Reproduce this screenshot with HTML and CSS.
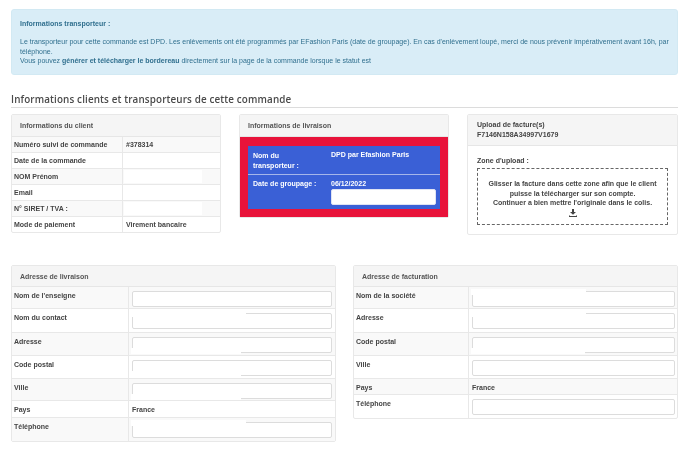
FILE: index.html
```html
<!DOCTYPE html>
<html lang="fr">
<head>
<meta charset="utf-8">
<title>Informations transporteur</title>
<link rel="stylesheet" href="styles.css">
</head>
<body>
<main class="page">
  <section class="alert">
    <p class="alert-title"><b>Informations transporteur :</b></p>
    <p>Le transporteur pour cette commande est DPD. Les enlèvements ont été programmés par EFashion Paris (date de groupage). En cas d'enlèvement loupé, merci de nous prévenir impérativement avant 16h, par téléphone.<br>Vous pouvez <b>générer et télécharger le bordereau</b> directement sur la page de la commande lorsque le statut est</p>
  </section>

  <h2 class="section-title">Informations clients et transporteurs de cette commande</h2>

  <div class="three-cols">
    <section class="panel">
      <header class="panel-head">Informations du client</header>
      <div class="info-row striped"><span class="info-label">Numéro suivi de commande</span><span class="info-value">#378314</span></div>
      <div class="info-row"><span class="info-label">Date de la commande</span><span class="info-value"></span></div>
      <div class="info-row striped"><span class="info-label">NOM Prénom</span><span class="info-value"><i class="mask mask-info"></i></span></div>
      <div class="info-row"><span class="info-label">Email</span><span class="info-value"></span></div>
      <div class="info-row striped"><span class="info-label">N° SIRET / TVA :</span><span class="info-value"><i class="mask mask-info"></i></span></div>
      <div class="info-row"><span class="info-label">Mode de paiement</span><span class="info-value">Virement bancaire</span></div>
    </section>

    <section class="panel panel-delivery">
      <header class="panel-head">Informations de livraison</header>
      <div class="red-box">
        <div class="blue-box">
          <div class="blue-row blue-row-first"><span class="blue-label">Nom du<br>transporteur :</span><span>DPD par Efashion Paris</span></div>
          <div class="blue-row"><span class="blue-label">Date de groupage :</span><div class="blue-date">06/12/2022<span class="blue-input"></span></div></div>
        </div>
      </div>
    </section>

    <section class="panel panel-upload">
      <header class="panel-head panel-head-tall">Upload de facture(s)<br>F7146N158A34997V1679</header>
      <div class="upload-body">
        <p class="upload-label">Zone d'upload :</p>
        <div class="dropzone">
          <p>Glisser la facture dans cette zone afin que le client<br>puisse la télécharger sur son compte.<br>Continuer a bien mettre l'originale dans le colis.</p>
          <svg class="dl-icon" width="8" height="8" viewBox="0 0 8 8" aria-hidden="true"><path d="M3 0h2v3h2L4 5.8 1 3h2zM0 6.4h1v.7h6v-.7h1V8H0z" fill="#444"/></svg>
        </div>
      </div>
    </section>
  </div>

  <div class="two-cols">
    <section class="panel addr addr-left">
      <header class="panel-head">Adresse de livraison</header>
      <div class="addr-row h22 striped"><span class="addr-label">Nom de l'enseigne</span><span class="addr-value"><span class="field"></span></span></div>
      <div class="addr-row h24"><span class="addr-label">Nom du contact</span><span class="addr-value"><span class="field"><i class="mask mask-top"></i></span></span></div>
      <div class="addr-row h23 striped"><span class="addr-label">Adresse</span><span class="addr-value"><span class="field"><i class="mask mask-bottom"></i></span></span></div>
      <div class="addr-row h23"><span class="addr-label">Code postal</span><span class="addr-value"><span class="field"><i class="mask mask-bottom"></i></span></span></div>
      <div class="addr-row h22 striped"><span class="addr-label">Ville</span><span class="addr-value"><span class="field"><i class="mask mask-bottom"></i></span></span></div>
      <div class="addr-row h17"><span class="addr-label">Pays</span><span class="addr-value">France</span></div>
      <div class="addr-row h23 striped"><span class="addr-label">Téléphone</span><span class="addr-value"><span class="field"><i class="mask mask-top"></i></span></span></div>
    </section>

    <section class="panel addr addr-right">
      <header class="panel-head">Adresse de facturation</header>
      <div class="addr-row h22 striped"><span class="addr-label">Nom de la société</span><span class="addr-value"><span class="field"><i class="mask mask-top"></i></span></span></div>
      <div class="addr-row h24"><span class="addr-label">Adresse</span><span class="addr-value"><span class="field"><i class="mask mask-top"></i></span></span></div>
      <div class="addr-row h23 striped"><span class="addr-label">Code postal</span><span class="addr-value"><span class="field"><i class="mask mask-bottom"></i></span></span></div>
      <div class="addr-row h23"><span class="addr-label">Ville</span><span class="addr-value"><span class="field"></span></span></div>
      <div class="addr-row h16 striped"><span class="addr-label">Pays</span><span class="addr-value">France</span></div>
      <div class="addr-row h23"><span class="addr-label">Téléphone</span><span class="addr-value"><span class="field"></span></span></div>
    </section>
  </div>
</main>
</body>
</html>
```
FILE: styles.css
```css
* { box-sizing: border-box; }
html, body { margin: 0; background: #fff; }
body {
  width: 688px;
  height: 449px;
  overflow: hidden;
  font-family: "Liberation Sans", Arial, sans-serif;
  font-size: 7px;
  color: #444;
}
p { margin: 0; }
.page { padding: 9px 10px 0 11px; filter: blur(0.35px); }

.alert {
  height: 66px;
  padding: 9px 8px;
  background: #d9edf7;
  border: 1px solid #d2e9f3;
  border-radius: 3px;
  color: #31708f;
  font-size: 7px;
  line-height: 9.4px;
}
.alert-title { margin-bottom: 9px; }

.section-title {
  margin: 18px 0 0;
  height: 15px;
  padding-bottom: 1px;
  font-family: "Open Sans", sans-serif;
  font-size: 9.85px;
  font-weight: 600;
  line-height: 13px;
  letter-spacing: 0.13px;
  color: #4a4a4a;
  border-bottom: 1px solid #dcdcdc;
}

.three-cols {
  margin-top: 6px;
  display: grid;
  grid-template-columns: 210px 210px 211px;
  column-gap: 18px;
  align-items: start;
}
.panel {
  background: #fff;
  border: 1px solid #e8e8e8;
  border-radius: 2px;
}
.panel-head {
  height: 22px;
  padding: 0 8px;
  display: flex;
  align-items: center;
  background: #f5f5f5;
  border-bottom: 1px solid #e6e6e6;
  font-weight: bold;
  color: #555;
}
.panel-head-tall {
  display: block;
  height: 31px;
  padding: 5px 9px;
  line-height: 9.5px;
  color: #444;
}
.addr .panel-head { height: 21px; }

.info-row {
  display: flex;
  height: 16px;
  align-items: center;
  border-bottom: 1px solid #e8e8e8;
  font-weight: bold;
}
.info-row:last-child { border-bottom: 0; height: 15px; }
.info-row.striped { background: #f9f9f9; }
.info-label { width: 111px; padding-left: 2px; align-self: stretch; display: flex; align-items: center; border-right: 1px solid #e8e8e8; }
.info-value { flex: 1; padding-left: 3px; position: relative; align-self: stretch; display: flex; align-items: center; }

.panel-delivery { border-color: #e8e8e8; }
.red-box { height: 80px; padding: 9px 8px 8px; background: #e8133a; }
.blue-box {
  height: 63px;
  padding: 0 5px;
  background: #3a60d6;
  color: #fff;
  font-weight: bold;
}
.blue-row { display: flex; padding-top: 4px; }
.blue-row-first {
  height: 29px;
  margin: 0 -5px;
  padding: 5px 5px 0;
  border-bottom: 1px solid #a5b6ea;
}
.blue-label { width: 70px; margin-right: 8px; flex: none; line-height: 9.5px; }
.blue-date { flex: 1; line-height: 9.5px; }
.blue-input {
  display: block;
  width: 105px;
  height: 16px;
  margin-top: 0.5px;
  background: #fff;
  border: 1px solid #dfe3f3;
  border-radius: 2px;
}

.upload-body { padding: 10px 9px 0; height: 88px; }
.upload-label { font-weight: bold; line-height: 9px; }
.dropzone {
  height: 57px;
  margin-top: 3px;
  padding-top: 10px;
  border: 1px dashed #666;
  text-align: center;
  font-weight: bold;
  line-height: 9.6px;
}
.dl-icon { display: block; margin: 1px auto 0; }

.two-cols {
  margin-top: 30px;
  display: grid;
  grid-template-columns: 325px 325px;
  column-gap: 17px;
  align-items: start;
}
.addr-row {
  display: flex;
  border-bottom: 1px solid #e8e8e8;
  font-weight: bold;
}
.addr-row:last-child { border-bottom: 0; }
.addr-row.striped { background: #f9f9f9; }
.addr-label { padding: 4px 3px 0 2px; border-right: 1px solid #e8e8e8; line-height: 9px; }
.addr-left .addr-label { width: 117px; }
.addr-right .addr-label { width: 115px; }
.addr-value {
  flex: 1;
  padding: 4px 3px 0;
  line-height: 9px;
}
.addr-right .addr-value { padding-right: 2px; }
.h16 { height: 16px; }
.h17 { height: 17px; }
.h22 { height: 22px; }
.h23 { height: 23px; }
.h24 { height: 24px; }
.field {
  display: block;
  position: relative;
  height: 16px;
  background: #fff;
  border: 1px solid #dcdcdc;
  border-radius: 2px;
}
.mask { position: absolute; display: block; background: #fff; }
.mask-info { left: 1px; top: 1px; width: 78px; height: 13px; }
.mask-top { left: -2px; top: -3px; width: 115px; height: 6px; }
.mask-bottom { left: -2px; bottom: -2px; width: 110px; height: 6px; }
.addr-right .mask-bottom { width: 114px; }
```
